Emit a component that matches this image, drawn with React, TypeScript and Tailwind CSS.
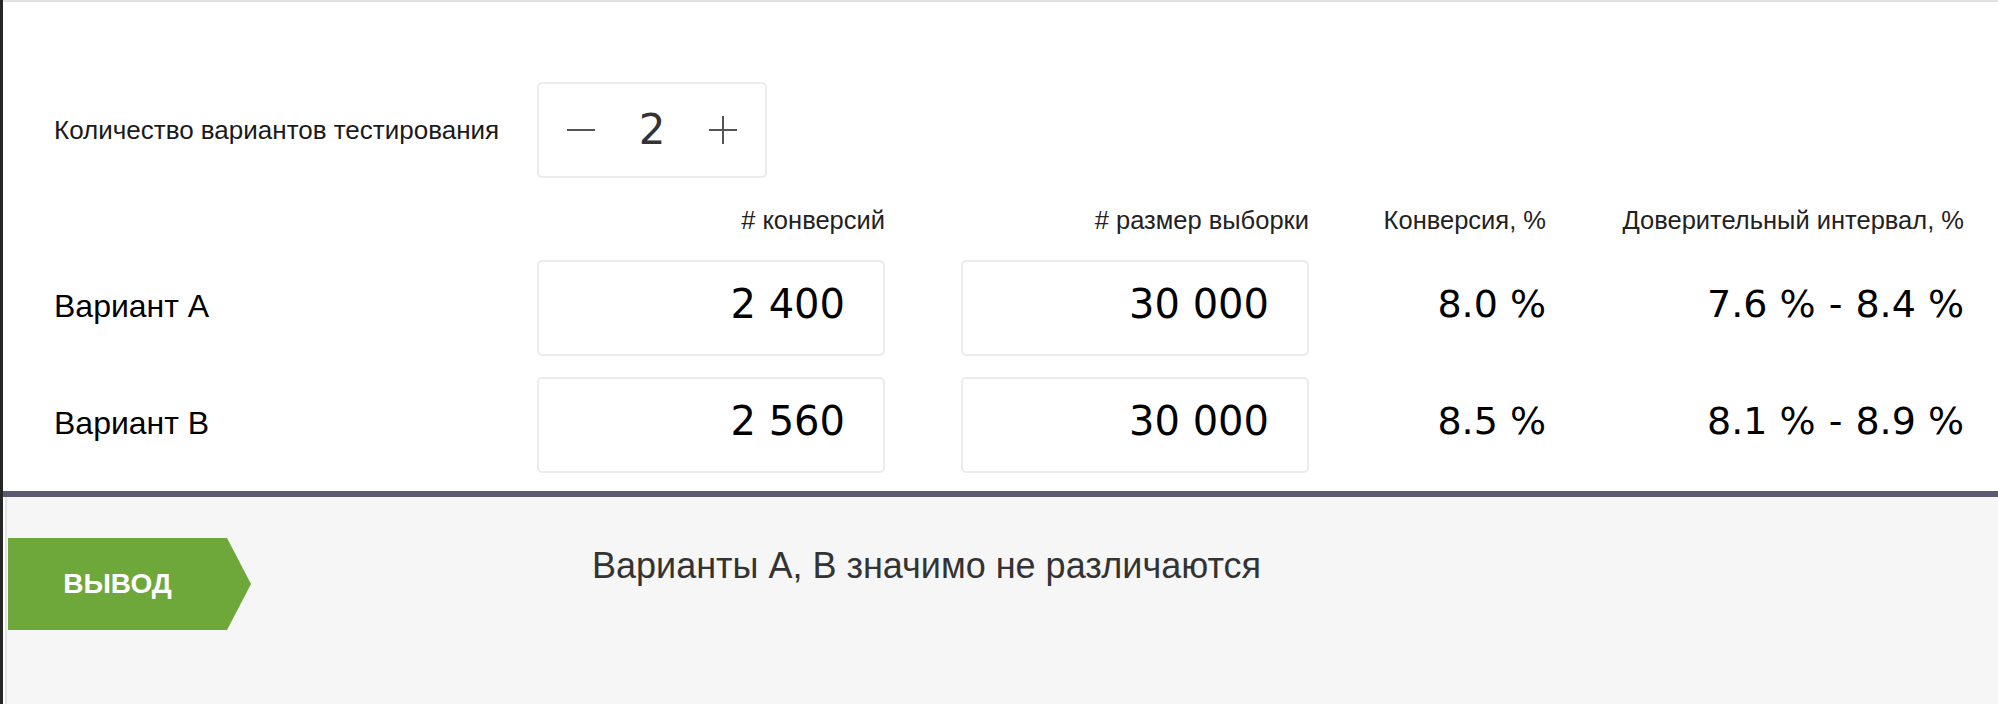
import React, { useState } from 'react';

type Variant = {
  name: string;
  conversions: string;
  size: string;
  rate: string;
  from: string;
  to: string;
};

const variants: Variant[] = [
  { name: 'Вариант А', conversions: '2 400', size: '30 000', rate: '8.0 %', from: '7.6 %', to: '8.4 %' },
  { name: 'Вариант В', conversions: '2 560', size: '30 000', rate: '8.5 %', from: '8.1 %', to: '8.9 %' },
];

const sans = "font-['Liberation_Sans',Arial,sans-serif]";
const deja = "font-['DejaVu_Sans',Verdana,sans-serif]";

const MinusIcon = () => (
  <svg width="28" height="28" viewBox="0 0 28 28" fill="none">
    <line x1="0" y1="14" x2="28" y2="14" stroke="#555" strokeWidth="2" />
  </svg>
);

const PlusIcon = () => (
  <svg width="28" height="28" viewBox="0 0 28 28" fill="none">
    <line x1="0" y1="14" x2="28" y2="14" stroke="#555" strokeWidth="2" />
    <line x1="14" y1="0" x2="14" y2="28" stroke="#555" strokeWidth="2" />
  </svg>
);

const ValueBox = ({ value }: { value: string }) => (
  <div className="w-[348px] h-[96px] flex items-center justify-end pr-[38px] pb-2 border-2 border-[#ebebeb] rounded-[5px] bg-white">
    <span className={`${deja} text-[40px] text-black leading-none`}>{value}</span>
  </div>
);

const App = () => {
  const [count, setCount] = useState(2);

  return (
    <div className="h-screen w-full flex flex-col bg-white border-l-[3px] border-[#262626] overflow-hidden">
      {/* calculator */}
      <div className="border-t-2 border-[#e2e2e2] pl-[51px] pt-[80px] pb-[18px]">
        <div className="flex items-center">
          <div className={`${sans} w-[483px] text-[26px] text-[#1a1a1a]`}>
            Количество вариантов тестирования
          </div>
          <div className="w-[230px] h-[96px] flex items-center justify-between px-[28px] border-2 border-[#ebebeb] rounded-[5px]">
            <button onClick={() => setCount(c => Math.max(2, c - 1))} className="flex items-center">
              <MinusIcon />
            </button>
            <span className={`${deja} text-[42px] text-[#333] leading-none`}>{count}</span>
            <button onClick={() => setCount(c => c + 1)} className="flex items-center">
              <PlusIcon />
            </button>
          </div>
        </div>

        <div className={`${sans} flex items-center mt-[27px] h-[30px] text-[25.5px] text-[#222]`}>
          <div className="w-[483px]" />
          <div className="w-[348px] text-right">#&nbsp;конверсий</div>
          <div className="w-[424px] text-right">#&nbsp;размер выборки</div>
          <div className="w-[237px] text-right">Конверсия, %</div>
          <div className="w-[418px] text-right">Доверительный интервал, %</div>
        </div>

        <div className="flex flex-col gap-[21px] mt-[25px]">
          {variants.map(v => (
            <div key={v.name} className="flex items-center">
              <div className={`${sans} w-[483px] text-[32px] text-black pb-1`}>{v.name}</div>
              <ValueBox value={v.conversions} />
              <div className="ml-[76px]">
                <ValueBox value={v.size} />
              </div>
              <div className={`${deja} w-[237px] text-right text-[38px] text-black pb-2`}>{v.rate}</div>
              <div className={`${deja} w-[418px] flex justify-end text-[38px] text-black pb-2`}>
                <span>{v.from}</span>
                <span className="mx-[13px]">-</span>
                <span>{v.to}</span>
              </div>
            </div>
          ))}
        </div>
      </div>

      <div className="h-[6px] bg-[#5a5b72]" />

      {/* result */}
      <div className="flex-1 flex pl-[2px] bg-white">
        <div className="flex-1 flex items-start border-l-2 border-[#e4e4e4] bg-[#f6f6f6] pt-[41px]">
          <div className="ml-px w-[243px] h-[92px] flex items-center bg-[#6fa83a] [clip-path:polygon(0_0,219px_0,243px_50%,219px_100%,0_100%)]">
            <span className={`${sans} w-[219px] text-center text-[28px] font-bold text-white`}>ВЫВОД</span>
          </div>
          <div className={`${sans} ml-[341px] mt-px text-[36px] text-[#333]`}>
            Варианты А, В значимо не различаются
          </div>
        </div>
      </div>
    </div>
  );
};

export default App;
